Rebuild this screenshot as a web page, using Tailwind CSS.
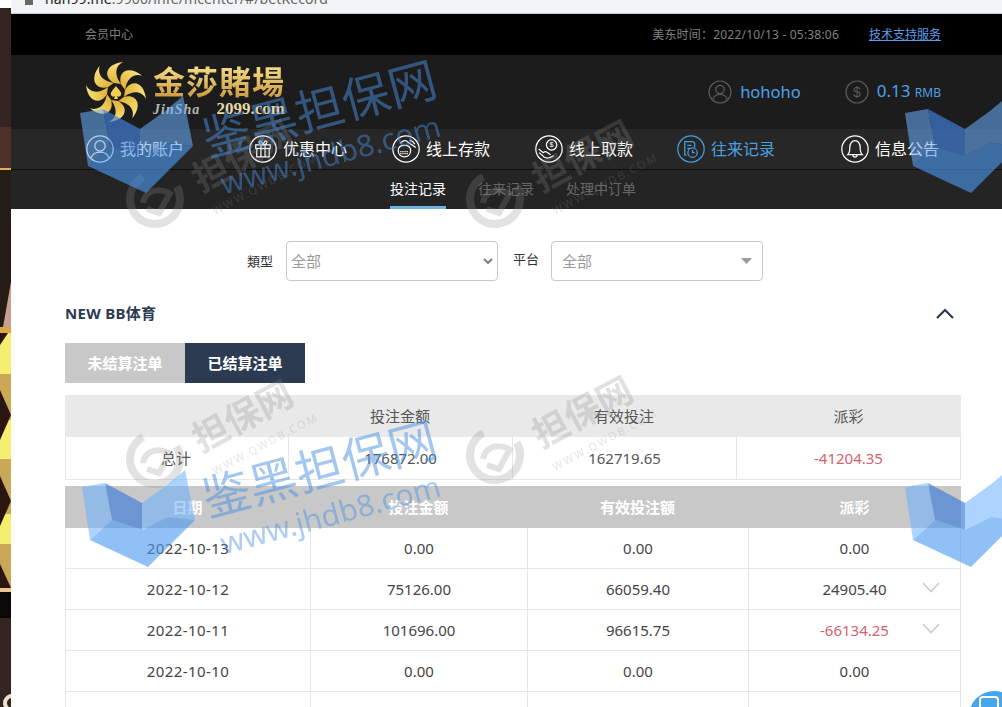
<!DOCTYPE html>
<html lang="zh-CN">
<head>
    <meta charset="UTF-8">
    <title>投注记录</title>
    <script src="https://cdn.jsdelivr.net/npm/@tailwindcss/browser@4"></script>
</head>
<body class="bg-white text-[#444] font-['Noto_Sans','Noto_Sans_CJK_SC',sans-serif]">
<div class="relative flex h-[707px] w-[1002px] overflow-hidden">

    <!-- slice of the window behind the page -->
    <svg class="shrink-0" width="11" height="707" viewBox="0 0 11 707">
        <rect width="11" height="707" fill="#fff"/>
        <rect y="8" width="11" height="119" fill="#35231f"/>
        <rect y="127" width="11" height="41" fill="#4d3029"/>
        <rect y="168" width="11" height="2" fill="#dcae62"/>
        <rect y="170" width="11" height="160" fill="#261c16"/>
        <polygon points="11,282 11,327 3,327" fill="#c9a090"/>
        <rect y="327" width="11" height="6" fill="#d9a648"/>
        <rect y="333" width="11" height="41" fill="#f5ee70"/>
        <polygon points="0,333 8,333 0,345" fill="#2a160e"/>
        <rect y="374" width="11" height="46" fill="#c9a858"/>
        <rect y="420" width="11" height="39" fill="#f5ee70"/>
        <rect y="459" width="11" height="55" fill="#c9a858"/>
        <rect y="514" width="11" height="30" fill="#f5ee70"/>
        <rect y="544" width="11" height="43" fill="#c9a858"/>
        <polygon points="0,390 11,415 0,440" fill="#2a160e"/>
        <polygon points="0,476 11,501 0,526" fill="#2a160e"/>
        <polygon points="0,564 11,588 0,588" fill="#2a160e"/>
        <rect y="588" width="11" height="4" fill="#e8c890"/>
        <rect y="592" width="11" height="26" fill="#0b0908"/>
        <rect y="618" width="11" height="89" fill="#33241f"/>
        <circle cx="12" cy="703" r="7" fill="none" stroke="#e8e0d0" stroke-width="4"/>
    </svg>

    <div class="flex min-w-0 flex-1 flex-col">
        <!-- browser address bar -->
        <div class="relative h-[14px] shrink-0 overflow-hidden border-b border-[#c9ccd0] bg-[#f1f3f4]">
            <div class="absolute left-[14px] top-0 h-[5px] w-[8px] bg-[#666]"></div>
            <div class="absolute left-[34px] top-[-11px] whitespace-nowrap text-[14px] leading-[20px] tracking-[0.1px] text-[#666]"><span class="text-[#222]">nan99.me</span>:9900/infe/mcenter/#/betRecord</div>
        </div>

        <!-- top strip -->
        <div class="flex h-[41px] shrink-0 items-center justify-between bg-black pl-[74px] pr-[61px] text-[12px] text-[#808080]">
            <span>会员中心</span>
            <div class="flex items-center gap-[30px]">
                <span class="tracking-[0.2px]">美东时间：2022/10/13 - 05:38:06</span>
                <a class="text-[#5c9fe8] underline">技术支持服务</a>
            </div>
        </div>

        <!-- logo + account -->
        <div class="flex h-[74px] shrink-0 items-center justify-between bg-[#1c1c1c] pl-[74px] pr-[61px]">
            <div class="flex items-center gap-[6px]">
                <svg width="62" height="62" viewBox="-31 -31 62 62">
                    <defs>
                        <linearGradient id="gold" x1="0" y1="0" x2="0" y2="1">
                            <stop offset="0" stop-color="#f8e27a"/>
                            <stop offset="1" stop-color="#e0b238"/>
                        </linearGradient>
                        <path id="blade" d="M-2 -9 C-13 -15 -11 -28 7 -30 C-1 -26 -2 -17 5 -8 Z" fill="url(#gold)"/>
                    </defs>
                    <use href="#blade"/>
                    <use href="#blade" transform="rotate(45)"/>
                    <use href="#blade" transform="rotate(90)"/>
                    <use href="#blade" transform="rotate(135)"/>
                    <use href="#blade" transform="rotate(180)"/>
                    <use href="#blade" transform="rotate(225)"/>
                    <use href="#blade" transform="rotate(270)"/>
                    <use href="#blade" transform="rotate(315)"/>
                    <path d="M0 -6 C3 -2 6 0 5 3 C4 5 2 5 1 4 L2 7 L-2 7 L-1 4 C-2 5 -4 5 -5 3 C-6 0 -3 -2 0 -6 Z" fill="#f2cf52"/>
                </svg>
                <div class="flex flex-col pb-[2px]">
                    <div class="bg-gradient-to-b from-[#f7e28a] to-[#c9963c] bg-clip-text text-[32px] font-bold leading-[36px] tracking-[1px] text-transparent">金莎賭場</div>
                    <div class="mt-[1px] flex items-baseline justify-between font-['Liberation_Serif',serif] text-[17px] font-bold leading-[16px] text-[#e6d9a8]">
                        <span class="text-[14px] italic tracking-[1px] text-[#b7b7b7]">JinSha</span>
                        <span>2099.com</span>
                    </div>
                </div>
            </div>
            <div class="flex items-center">
                <svg width="24" height="24" viewBox="0 0 24 24" fill="none" stroke="#5a5a5a" stroke-width="1.2">
                    <circle cx="12" cy="12" r="11"/>
                    <circle cx="12" cy="9.5" r="4.2"/>
                    <path d="M4.8 19.5 C6 15.5 9 14.5 12 14.5 C15 14.5 18 15.5 19.2 19.5"/>
                </svg>
                <span class="ml-[8px] text-[16.5px] leading-[24px] text-[#4ea3e8]">hohoho</span>
                <svg class="ml-[44px]" width="24" height="24" viewBox="0 0 24 24" fill="none" stroke="#5a5a5a" stroke-width="1.2">
                    <circle cx="12" cy="12" r="11"/>
                    <text x="12" y="17" text-anchor="middle" font-size="14" fill="#5a5a5a" stroke="none" font-family="Liberation Sans">$</text>
                </svg>
                <span class="ml-[8px] text-[17px] leading-[24px] text-[#4ea3e8]">0.13 <span class="text-[12px]">RMB</span></span>
            </div>
        </div>

        <!-- main nav -->
        <nav class="flex h-[41px] shrink-0 items-center border-b border-[#0f0f0f] bg-[#272727] pl-[75px] text-[16px] text-white">
            <a class="flex w-[163px] items-center gap-[6px]">
                <svg width="28" height="28" viewBox="0 0 27 27" fill="none" stroke="#fff" stroke-width="1.2">
                    <circle cx="13.5" cy="13.5" r="12.7"/>
                    <circle cx="13.5" cy="10.5" r="5"/>
                    <path d="M5 22 C6.5 17.5 10 16.5 13.5 16.5 C17 16.5 20.5 17.5 22 22"/>
                </svg>
                我的账户
            </a>
            <a class="flex w-[143px] items-center gap-[6px]">
                <svg width="28" height="28" viewBox="0 0 27 27" fill="none" stroke="#fff" stroke-width="1.2">
                    <circle cx="13.5" cy="13.5" r="12.7"/>
                    <rect x="6.5" y="9.5" width="14" height="3.5"/>
                    <path d="M7.5 13 V21 H19.5 V13 M11.5 9.5 V21 M15.5 9.5 V21"/>
                    <path d="M13.5 9.5 C10 9 9 7 10 6 C11.5 5 13 7.5 13.5 9.5 C14 7.5 15.5 5 17 6 C18 7 17 9 13.5 9.5 Z"/>
                </svg>
                优惠中心
            </a>
            <a class="flex w-[143px] items-center gap-[6px]">
                <svg width="28" height="28" viewBox="0 0 27 27" fill="none" stroke="#fff" stroke-width="1.2">
                    <circle cx="13.5" cy="13.5" r="12.7"/>
                    <path d="M6 15 C6 11.5 9 10 12 10 C15 10 18 11.5 18 15 C18 19 15 21 12 21 C9 21 6 19 6 15 Z"/>
                    <path d="M8 16 H16 M8 18 H16" stroke-dasharray="1.2 0.8"/>
                    <path d="M8 8 C11 4.5 14 5 15.5 7 L23 12 M17 5 C19 5.5 21 7 22 9"/>
                </svg>
                线上存款
            </a>
            <a class="flex w-[142px] items-center gap-[6px]">
                <svg width="28" height="28" viewBox="0 0 27 27" fill="none" stroke="#fff" stroke-width="1.2">
                    <circle cx="13.5" cy="13.5" r="12.7"/>
                    <circle cx="16" cy="9.5" r="5"/>
                    <text x="16" y="12" text-anchor="middle" font-size="7" fill="#fff" stroke="none" font-family="Liberation Sans">$</text>
                    <path d="M3.5 13.5 L8 17 C9.5 15.5 11 16 12 17 L15 19 M4 17 L9 21.5 C12 23 15 22 18 20"/>
                </svg>
                线上取款
            </a>
            <a class="flex w-[164px] items-center gap-[6px] text-[#4a9fe0]">
                <svg width="28" height="28" viewBox="0 0 27 27" fill="none" stroke="#4a9fe0" stroke-width="1.2">
                    <circle cx="13.5" cy="13.5" r="12.7"/>
                    <path d="M9 19.5 H7.5 V6.5 H15.5 L17 8 V12"/>
                    <path d="M10 10 H14 M10 13 H13"/>
                    <circle cx="15" cy="17" r="4.5"/>
                    <path d="M15 14.5 V17 H17"/>
                </svg>
                往来记录
            </a>
            <a class="flex items-center gap-[6px]">
                <svg width="28" height="28" viewBox="0 0 27 27" fill="none" stroke="#fff" stroke-width="1.2">
                    <circle cx="13.5" cy="13.5" r="12.7"/>
                    <path d="M6.5 19 C8.5 17 8.5 14.5 8.5 12 C8.5 8.5 10.5 5.5 13.5 5.5 C16.5 5.5 18.5 8.5 18.5 12 C18.5 14.5 18.5 17 20.5 19 Z"/>
                    <path d="M11.5 19 C11.5 22 15.5 22 15.5 19"/>
                </svg>
                信息公告
            </a>
        </nav>

        <!-- sub nav -->
        <div class="flex h-[39px] shrink-0 items-stretch gap-[32px] bg-[#242424] pl-[379px] text-[14px] text-[#666]">
            <a class="flex items-center border-b-[3px] border-[#6db3e0] text-white">投注记录</a>
            <a class="flex items-center pb-[3px]">往来记录</a>
            <a class="flex items-center pb-[3px]">处理中订单</a>
        </div>

        <!-- content -->
        <div class="flex flex-col pl-[54px] pr-[41px]">
            <div class="mt-[32px] flex items-center text-[13px] text-[#333]">
                <span class="ml-[182px] w-[39px] pt-[2px]">類型</span>
                <div class="flex h-[40px] w-[212px] items-center justify-between rounded border border-[#c8c8c8] pl-[4px] pr-[4px] text-[15px] text-[#999]">
                    全部
                    <svg width="10" height="6" viewBox="0 0 10 6" fill="none" stroke="#777" stroke-width="1.8"><path d="M1 1 L5 5 L9 1"/></svg>
                </div>
                <span class="ml-[15px] w-[38px] pb-[2px]">平台</span>
                <div class="flex h-[40px] w-[212px] items-center justify-between rounded border border-[#c8c8c8] pl-[10px] pr-[10px] text-[15px] text-[#999]">
                    全部
                    <svg width="11" height="6" viewBox="0 0 11 6"><path d="M0 0 H11 L5.5 6 Z" fill="#999"/></svg>
                </div>
            </div>

            <div class="mt-[22px] flex h-[20px] items-center justify-between pr-[7px]">
                <span class="text-[15px] font-bold tracking-[0.3px] text-[#2c3a4f]">NEW BB体育</span>
                <svg width="18" height="11" viewBox="0 0 18 11" fill="none" stroke="#2c3a4f" stroke-width="2.2"><path d="M1 10 L9 2 L17 10"/></svg>
            </div>

            <div class="mt-[20px] flex text-[15px] font-bold text-white">
                <div class="flex h-[40px] w-[120px] items-center justify-center bg-[#c8c8c8]">未结算注单</div>
                <div class="flex h-[40px] w-[120px] items-center justify-center bg-[#2c3b52]">已结算注单</div>
            </div>

            <!-- totals -->
            <div class="mt-[12px] grid grid-cols-[223px_224px_224px_225px] text-center text-[15px] text-[#555]">
                <div class="flex h-[42px] items-center justify-center bg-[#e9e9e9]"></div>
                <div class="flex h-[42px] items-center justify-center bg-[#e9e9e9]">投注金额</div>
                <div class="flex h-[42px] items-center justify-center bg-[#e9e9e9]">有效投注</div>
                <div class="flex h-[42px] items-center justify-center bg-[#e9e9e9]">派彩</div>
                <div class="flex h-[43px] items-center justify-center border-b border-l border-[#e6e6e6] pr-[2px]">总计</div>
                <div class="flex h-[43px] items-center justify-center border-b border-l border-[#e6e6e6]">176872.00</div>
                <div class="flex h-[43px] items-center justify-center border-b border-l border-[#e6e6e6]">162719.65</div>
                <div class="flex h-[43px] items-center justify-center border-x border-b border-[#e6e6e6] text-[#d4626c]">-41204.35</div>
            </div>

            <!-- daily -->
            <div class="mt-[6px] grid grid-cols-[245px_217px_221px_213px] text-center text-[15px]">
                <div class="flex h-[42px] items-center justify-center bg-[#c8c8c8] font-bold text-white">日期</div>
                <div class="flex h-[42px] items-center justify-center bg-[#c8c8c8] font-bold text-white">投注金额</div>
                <div class="flex h-[42px] items-center justify-center bg-[#c8c8c8] font-bold text-white">有效投注额</div>
                <div class="flex h-[42px] items-center justify-center bg-[#c8c8c8] font-bold text-white">派彩</div>

                <div class="flex h-[41px] items-center justify-center border-b border-l border-[#e6e6e6] tracking-[0.4px]">2022-10-13</div>
                <div class="flex h-[41px] items-center justify-center border-b border-l border-[#e6e6e6]">0.00</div>
                <div class="flex h-[41px] items-center justify-center border-b border-l border-[#e6e6e6]">0.00</div>
                <div class="flex h-[41px] items-center justify-center border-x border-b border-[#e6e6e6]">0.00</div>

                <div class="flex h-[41px] items-center justify-center border-b border-l border-[#e6e6e6] tracking-[0.4px]">2022-10-12</div>
                <div class="flex h-[41px] items-center justify-center border-b border-l border-[#e6e6e6]">75126.00</div>
                <div class="flex h-[41px] items-center justify-center border-b border-l border-[#e6e6e6]">66059.40</div>
                <div class="relative flex h-[41px] items-center justify-center border-x border-b border-[#e6e6e6]">
                    24905.40
                    <svg class="absolute right-[20px] top-[13px]" width="18" height="11" viewBox="0 0 18 11" fill="none" stroke="#ccc" stroke-width="1.6"><path d="M1 1 L9 9.5 L17 1"/></svg>
                </div>

                <div class="flex h-[41px] items-center justify-center border-b border-l border-[#e6e6e6] tracking-[0.4px]">2022-10-11</div>
                <div class="flex h-[41px] items-center justify-center border-b border-l border-[#e6e6e6]">101696.00</div>
                <div class="flex h-[41px] items-center justify-center border-b border-l border-[#e6e6e6]">96615.75</div>
                <div class="relative flex h-[41px] items-center justify-center border-x border-b border-[#e6e6e6] text-[#d4626c]">
                    -66134.25
                    <svg class="absolute right-[20px] top-[13px]" width="18" height="11" viewBox="0 0 18 11" fill="none" stroke="#ccc" stroke-width="1.6"><path d="M1 1 L9 9.5 L17 1"/></svg>
                </div>

                <div class="flex h-[41px] items-center justify-center border-b border-l border-[#e6e6e6] tracking-[0.4px]">2022-10-10</div>
                <div class="flex h-[41px] items-center justify-center border-b border-l border-[#e6e6e6]">0.00</div>
                <div class="flex h-[41px] items-center justify-center border-b border-l border-[#e6e6e6]">0.00</div>
                <div class="flex h-[41px] items-center justify-center border-x border-b border-[#e6e6e6]">0.00</div>

                <div class="h-[41px] border-l border-[#e6e6e6]"></div>
                <div class="h-[41px] border-l border-[#e6e6e6]"></div>
                <div class="h-[41px] border-l border-[#e6e6e6]"></div>
                <div class="h-[41px] border-x border-[#e6e6e6]"></div>
            </div>
        </div>
    </div>

    <!-- floating chat button -->
    <div class="absolute left-[969px] top-[691px] flex h-[50px] w-[50px] items-start justify-center rounded-full bg-[#45a6ee] pt-[5px] pr-[10px]">
        <div class="h-[14px] w-[20px] rounded-sm border-2 border-white"></div>
    </div>

    <!-- image watermark over the whole screenshot -->
    <svg class="pointer-events-none absolute left-0 top-0" width="1002" height="707" viewBox="0 0 1002 707">
        <defs>
            <g id="shield">
                <polygon points="2,17 25,13 32,50 10,70" fill="#6ab0ff" fill-opacity="0.55"/>
                <polygon points="25,13 62,33 62,60 32,50" fill="#3f7fd8" fill-opacity="0.68"/>
                <polygon points="62,33 87,15 105,0 115,50 88,47 62,60" fill="#6ab0ff" fill-opacity="0.55"/>
                <polygon points="10,70 32,50 62,60 88,47 115,50 68,97" fill="#4a9af0" fill-opacity="0.62"/>
            </g>
            <g id="stamp">
                <circle cx="0" cy="0" r="25" fill="none" stroke="#8a8a8a" stroke-width="8" stroke-dasharray="118 40" opacity="0.25" transform="rotate(-30)"/>
                <path d="M-12 4 C-10 -8 2 -12 14 -6 M-8 10 L4 14 L16 -8" fill="none" stroke="#8a8a8a" stroke-width="6" opacity="0.25"/>
                <text transform="translate(46,-6) rotate(-28)" font-size="36" font-weight="700" fill="#8a8a8a" opacity="0.25" font-family="Noto Sans CJK SC">担保网</text>
                <text transform="translate(60,16) rotate(-28)" font-size="11" letter-spacing="2" fill="#8a8a8a" opacity="0.22" font-family="Noto Sans">WWW.QWDB.COM</text>
            </g>
            <g id="brand" fill="#4a90e2">
                <text transform="translate(-6,22) rotate(-15)" font-size="48" font-family="Noto Sans CJK SC" opacity="0.5">鉴黑担保网</text>
                <text transform="rotate(-15)" x="-6" y="60" font-size="30" font-family="Noto Sans" opacity="0.45">www.jhdb8.com</text>
            </g>
        </defs>
        <use href="#stamp" transform="translate(155,199)"/>
        <use href="#stamp" transform="translate(495,199)"/>
        <use href="#stamp" transform="translate(155,459)"/>
        <use href="#stamp" transform="translate(495,455)"/>
        <use href="#brand" transform="translate(214,135)"/>
        <use href="#brand" transform="translate(214,495)"/>
        <use href="#shield" transform="translate(78,96)"/>
        <use href="#shield" transform="translate(80,470)"/>
        <use href="#shield" transform="translate(903,96)"/>
        <use href="#shield" transform="translate(903,470)"/>
    </svg>
</div>
</body>
</html>
